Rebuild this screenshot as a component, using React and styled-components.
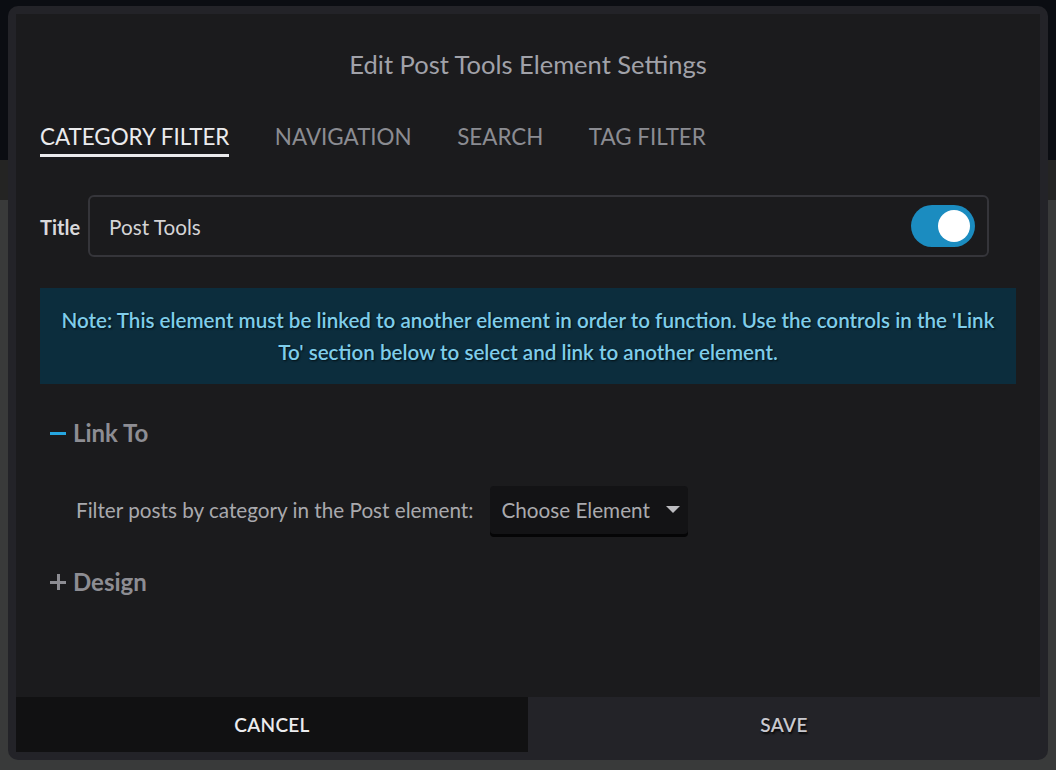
import { useState } from "react";
import styled, { createGlobalStyle } from "styled-components";

const GlobalStyle = createGlobalStyle`
  html, body {
    margin: 0;
    padding: 0;
  }
  body {
    font-family: Lato, "Open Sans", "Noto Sans", sans-serif;
    background: linear-gradient(
      to bottom,
      #0b0d12 0,
      #0b0d12 160px,
      #242423 160px,
      #242423 200px,
      #393a3a 200px
    );
    min-height: 770px;
  }
`;

const Page = styled.div`
  padding: 6px 8px 10px 8px;
  height: 770px;
  box-sizing: border-box;
`;

const Modal = styled.div`
  height: 754px;
  box-sizing: border-box;
  background: #232328;
  border-radius: 10px;
  padding: 8px;
  display: flex;
  flex-direction: column;
`;

const Body = styled.div`
  flex: 1;
  background: #1b1b1d;
  padding: 35px 24px 0 24px;
  display: flex;
  flex-direction: column;
`;

const Heading = styled.h1`
  margin: 0;
  font-size: 25.5px;
  line-height: 30px;
  font-weight: 400;
  color: #a1a2a9;
  text-align: center;
`;

const Tabs = styled.div`
  display: flex;
  gap: 45.5px;
  margin-top: 45px;
`;

const Tab = styled.button`
  background: none;
  border: 0;
  padding: 0 0 4px 0;
  font-family: inherit;
  font-size: 22.4px;
  line-height: 26px;
  text-transform: uppercase;
  color: ${(p) => (p.$active ? "#ebebed" : "#8b8c92")};
  border-bottom: 3px solid ${(p) => (p.$active ? "#ebebed" : "transparent")};
  cursor: pointer;
`;

const TitleRow = styled.div`
  display: flex;
  align-items: center;
  gap: 8px;
  margin-top: 38px;
  margin-right: 27px;
`;

const Label = styled.label`
  font-size: 20px;
  font-weight: 700;
  color: #d9d9db;
  padding-top: 2px;
`;

const InputBox = styled.div`
  flex: 1;
  height: 62px;
  box-sizing: border-box;
  border: 2px solid #35353a;
  border-radius: 6px;
  display: flex;
  align-items: center;
  padding: 0 12px 0 19px;
`;

const TextInput = styled.input`
  flex: 1;
  background: none;
  border: 0;
  outline: none;
  font-family: inherit;
  font-size: 20.7px;
  color: #d4d4d6;
  padding: 2px 0 0 0;
`;

const Toggle = styled.button`
  width: 64px;
  height: 42px;
  border-radius: 21px;
  border: 0;
  padding: 0 5px;
  background: ${(p) => (p.$on ? "#1b8cc0" : "#55555a")};
  display: flex;
  align-items: center;
  justify-content: ${(p) => (p.$on ? "flex-end" : "flex-start")};
  cursor: pointer;
`;

const Knob = styled.span`
  width: 32px;
  height: 32px;
  border-radius: 50%;
  background: #ffffff;
`;

const Note = styled.div`
  margin-top: 31px;
  background: #0c2d3d;
  padding: 16px 20px 16px;
  text-align: center;
  font-size: 20.6px;
  line-height: 32px;
  font-weight: 600;
  color: #7fcdea;
  text-shadow: 1px 1px 2px rgba(0, 0, 0, 0.7);
`;

const Section = styled.div`
  display: flex;
  align-items: center;
  gap: 7px;
  padding-left: 10px;
  margin-top: ${(p) => p.$top}px;
  font-size: 24px;
  line-height: 30px;
  font-weight: 700;
  color: #8d8d93;
  cursor: pointer;
`;

const Minus = styled.span`
  width: 16px;
  height: 3px;
  background: #26a6e0;
`;

const Plus = styled.span`
  position: relative;
  width: 16px;
  height: 16px;
  &::before,
  &::after {
    content: "";
    position: absolute;
    background: #8d8d93;
  }
  &::before {
    left: 0;
    right: 0;
    top: 6.5px;
    height: 3px;
  }
  &::after {
    top: 0;
    bottom: 0;
    left: 6.5px;
    width: 3px;
  }
`;

const FieldRow = styled.div`
  display: flex;
  align-items: center;
  gap: 17px;
  padding-left: 36px;
  margin-top: 38px;
  font-size: 20.7px;
  color: #a9a9ad;
`;

const Select = styled.div`
  width: 198px;
  height: 48px;
  box-sizing: border-box;
  background: #131315;
  border-radius: 4px;
  box-shadow: 0 3px 0 #050506;
  display: flex;
  align-items: center;
  justify-content: space-between;
  padding: 0 8px 0 11px;
  color: #aaaaae;
  cursor: pointer;
`;

const Caret = styled.span`
  width: 0;
  height: 0;
  border-left: 7px solid transparent;
  border-right: 7px solid transparent;
  border-top: 7px solid #bcbcc0;
  margin-bottom: 2px;
`;

const Footer = styled.div`
  display: grid;
  grid-template-columns: 1fr 1fr;
  height: 55px;
`;

const FooterButton = styled.button`
  border: 0;
  font-family: inherit;
  font-size: 19px;
  font-weight: 600;
  letter-spacing: 0.3px;
  background: ${(p) => (p.$primary ? "#232328" : "#111112")};
  color: ${(p) => (p.$primary ? "#c9c9cf" : "#ececee")};
  text-shadow: ${(p) => (p.$primary ? "1px 2px 2px rgba(0,0,0,0.8)" : "none")};
  cursor: pointer;
`;

const tabs = ["Category Filter", "Navigation", "Search", "Tag Filter"];

export default function App() {
  const [tab, setTab] = useState(0);
  const [on, setOn] = useState(true);
  const [title, setTitle] = useState("Post Tools");

  return (
    <>
      <GlobalStyle />
      <Page>
        <Modal>
          <Body>
            <Heading>Edit Post Tools Element Settings</Heading>
            <Tabs>
              {tabs.map((t, i) => (
                <Tab key={t} $active={i === tab} onClick={() => setTab(i)}>
                  {t}
                </Tab>
              ))}
            </Tabs>
            <TitleRow>
              <Label>Title</Label>
              <InputBox>
                <TextInput value={title} onChange={(e) => setTitle(e.target.value)} />
                <Toggle $on={on} onClick={() => setOn(!on)}>
                  <Knob />
                </Toggle>
              </InputBox>
            </TitleRow>
            <Note>
              Note: This element must be linked to another element in order to function. Use the
              controls in the 'Link To' section below to select and link to another element.
            </Note>
            <Section $top={34}>
              <Minus />
              Link To
            </Section>
            <FieldRow>
              Filter posts by category in the Post element:
              <Select>
                Choose Element
                <Caret />
              </Select>
            </FieldRow>
            <Section $top={33}>
              <Plus />
              Design
            </Section>
          </Body>
          <Footer>
            <FooterButton>CANCEL</FooterButton>
            <FooterButton $primary>SAVE</FooterButton>
          </Footer>
        </Modal>
      </Page>
    </>
  );
}
